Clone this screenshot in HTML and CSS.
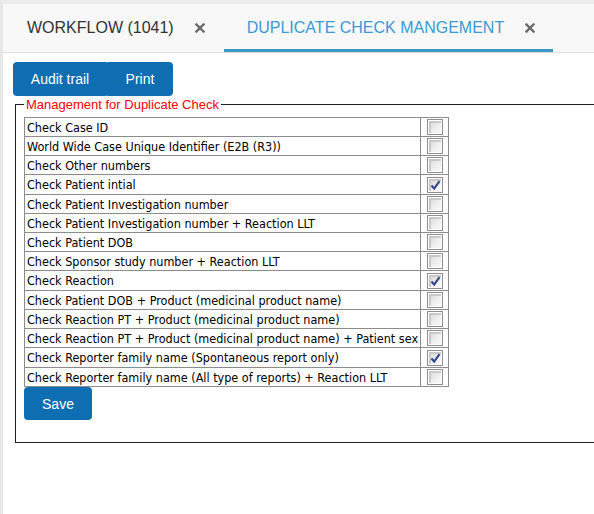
FILE: index.html
```html
<!DOCTYPE html>
<html>
<head>
<meta charset="utf-8">
<link rel="stylesheet" href="styles.css">
</head>
<body>
<div class="page">
  <div class="tabbar">
    <div class="tab">
      <span class="tab-label">WORKFLOW (1041)</span>
      <svg class="tab-close" width="10" height="10" viewBox="0 0 10 10"><path d="M1.5 1.5 L8.5 8.5 M8.5 1.5 L1.5 8.5" stroke="#6a6a6a" stroke-width="2.4" stroke-linecap="square"/></svg>
    </div>
    <div class="tab active">
      <span class="tab-label">DUPLICATE CHECK MANGEMENT</span>
      <svg class="tab-close" width="10" height="10" viewBox="0 0 10 10"><path d="M1.5 1.5 L8.5 8.5 M8.5 1.5 L1.5 8.5" stroke="#6a6a6a" stroke-width="2.4" stroke-linecap="square"/></svg>
    </div>
  </div>

  <div class="toolbar">
    <button class="btn btn-left">Audit trail</button><button class="btn btn-right">Print</button>
  </div>

  <fieldset class="mgmt">
    <legend>Management for Duplicate Check</legend>
    <table class="checks">
      <tr><td class="lbl">Check Case ID</td><td class="cb"><span class="box"></span></td></tr>
      <tr><td class="lbl">World Wide Case Unique Identifier (E2B (R3))</td><td class="cb"><span class="box"></span></td></tr>
      <tr><td class="lbl">Check Other numbers</td><td class="cb"><span class="box"></span></td></tr>
      <tr class="on"><td class="lbl">Check Patient intial</td><td class="cb"><span class="box"><svg viewBox="0 0 13 13" width="13" height="13"><path d="M2.5 6.5 L5.2 9.6 L10.5 2.2" fill="none" stroke="#34468c" stroke-width="2.2"/></svg></span></td></tr>
      <tr><td class="lbl">Check Patient Investigation number</td><td class="cb"><span class="box"></span></td></tr>
      <tr><td class="lbl">Check Patient Investigation number + Reaction LLT</td><td class="cb"><span class="box"></span></td></tr>
      <tr><td class="lbl">Check Patient DOB</td><td class="cb"><span class="box"></span></td></tr>
      <tr><td class="lbl">Check Sponsor study number + Reaction LLT</td><td class="cb"><span class="box"></span></td></tr>
      <tr class="on"><td class="lbl">Check Reaction</td><td class="cb"><span class="box"><svg viewBox="0 0 13 13" width="13" height="13"><path d="M2.5 6.5 L5.2 9.6 L10.5 2.2" fill="none" stroke="#34468c" stroke-width="2.2"/></svg></span></td></tr>
      <tr><td class="lbl">Check Patient DOB + Product (medicinal product name)</td><td class="cb"><span class="box"></span></td></tr>
      <tr><td class="lbl">Check Reaction PT + Product (medicinal product name)</td><td class="cb"><span class="box"></span></td></tr>
      <tr><td class="lbl">Check Reaction PT + Product (medicinal product name) + Patient sex</td><td class="cb"><span class="box"></span></td></tr>
      <tr class="on"><td class="lbl">Check Reporter family name (Spontaneous report only)</td><td class="cb"><span class="box"><svg viewBox="0 0 13 13" width="13" height="13"><path d="M2.5 6.5 L5.2 9.6 L10.5 2.2" fill="none" stroke="#34468c" stroke-width="2.2"/></svg></span></td></tr>
      <tr><td class="lbl">Check Reporter family name (All type of reports) + Reaction LLT</td><td class="cb"><span class="box"></span></td></tr>
    </table>
    <button class="btn btn-save">Save</button>
  </fieldset>
</div>
</body>
</html>
```

FILE: styles.css
```css
html, body {
  margin: 0;
  padding: 0;
  background: #ffffff;
  overflow: hidden;
}

body {
  width: 594px;
  height: 514px;
  font-family: "Liberation Sans", Arial, sans-serif;
}

.page {
  box-sizing: border-box;
  height: 514px;
  border-left: 3px solid #e7e7e7;
  border-top: 4px solid #ececec;
}

.tabbar {
  display: flex;
  height: 48px;
  background: #f8f8f8;
  border-bottom: 1px solid #dedede;
}

.tab {
  display: flex;
  align-items: center;
  box-sizing: border-box;
  height: 48px;
  padding: 0 19px 0 24px;
  gap: 21px;
  color: #333333;
  font-size: 16px;
}

.tab.active {
  padding: 0 18px 0 23px;
  gap: 21px;
  color: #3b9ad6;
  border-bottom: 3px solid #3996c8;
  padding-top: 3px;
}

.tab-label {
  white-space: nowrap;
}

.tab-close {
  display: block;
  flex: none;
}

.toolbar {
  display: flex;
  margin: 9px 0 0 10px;
}

.btn {
  font-family: "Liberation Sans", Arial, sans-serif;
  font-size: 14px;
  color: #ffffff;
  background: #0e6eb1;
  border: none;
  height: 34px;
  padding: 0;
  margin: 0;
  white-space: nowrap;
  cursor: pointer;
}

.btn-left {
  width: 94px;
  border-radius: 4px 1px 1px 4px;
}

.btn-right {
  width: 66px;
  border-radius: 1px 4px 4px 1px;
}

.mgmt {
  margin: 1px 0 0 12px;
  padding: 5px 8px 22px 8px;
  border: 1px solid #1e1e1e;
  width: 700px;
}

.mgmt legend {
  color: #ff0000;
  font-size: 13px;
  line-height: 15px;
  padding: 0 2px;
}

.checks {
  border-collapse: collapse;
  font-family: "DejaVu Sans Condensed", "DejaVu Sans", sans-serif;
  font-size: 12.5px;
  color: #000000;
}

.checks td {
  border: 1px solid #8c8c8c;
  height: 18px;
  padding: 0;
}

.checks tr.on td {
  height: 19px;
}

.checks td.lbl {
  padding: 0 2px;
  white-space: nowrap;
}

.checks td.cb {
  width: 27px;
  text-align: center;
  vertical-align: middle;
}

.box {
  display: inline-block;
  box-sizing: border-box;
  width: 16px;
  height: 16px;
  vertical-align: middle;
  border: 1px solid #8e8e8e;
  box-shadow: inset 0 0 0 1px #ffffff, inset 1px 1px 0 2px #c9c9c9;
  background: linear-gradient(135deg, #d4d4d4 0%, #eeeeee 55%, #fbfbfb 100%);
  position: relative;
}

.box svg {
  position: absolute;
  left: 1px;
  top: 1px;
}

.btn-save {
  display: block;
  width: 68px;
  height: 33px;
  border-radius: 4px;
  padding: 0;
}
```
